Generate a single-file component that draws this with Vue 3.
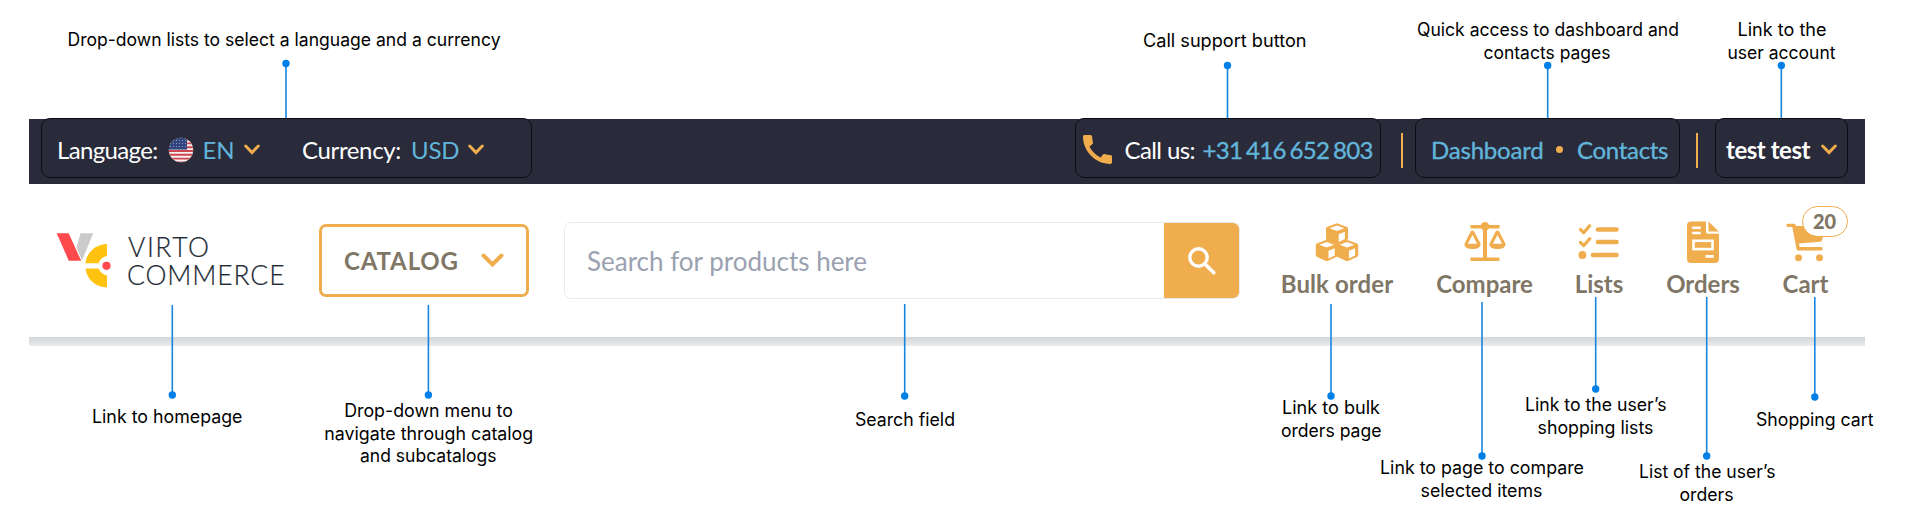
<script setup>
const callouts = [
  { x: 286, from: 63.5, to: 118, dot: 63.5, lines: [['Drop-down lists to select a language and a currency', 68, 500, 46]] },
  { x: 1227.5, from: 65.5, to: 118, dot: 65.5, lines: [['Call support button', 1143.5, 1306, 47]] },
  { x: 1547.7, from: 65.5, to: 118, dot: 65.5, lines: [['Quick access to dashboard and', 1417.5, 1678.5, 36.3], ['contacts pages', 1484, 1610, 58.5]] },
  { x: 1781.3, from: 65.5, to: 118, dot: 65.5, lines: [['Link to the', 1738, 1826, 36.3], ['user account', 1728, 1835, 58.5]] },
  { x: 172.3, from: 305, to: 395, dot: 395, lines: [['Link to homepage', 92.5, 242, 422.7]] },
  { x: 428.4, from: 305, to: 395, dot: 395, lines: [['Drop-down menu to', 344.7, 512.4, 417], ['navigate through catalog', 324.7, 532.7, 440], ['and subcatalogs', 360.5, 496, 462.2]] },
  { x: 904.7, from: 304, to: 396, dot: 396, lines: [['Search field', 855.4, 954.5, 426]] },
  { x: 1331, from: 304, to: 396, dot: 396, lines: [['Link to bulk', 1282.5, 1379.5, 414], ['orders page', 1281.5, 1381, 437]] },
  { x: 1482, from: 302, to: 456, dot: 456, lines: [['Link to page to compare', 1380.5, 1583.5, 474], ['selected items', 1421, 1542, 497]] },
  { x: 1595.7, from: 297, to: 389, dot: 389, lines: [['Link to the user’s', 1525.5, 1666, 411], ['shopping lists', 1538, 1653, 433.5]] },
  { x: 1706.7, from: 297, to: 456, dot: 456, lines: [['List of the user’s', 1639.5, 1775, 478], ['orders', 1680, 1733, 501]] },
  { x: 1814.8, from: 297, to: 397, dot: 397, lines: [['Shopping cart', 1756.5, 1873, 426]] },
]
</script>

<template>
  <div class="page">
    <header>
      <div class="topbar">
        <div class="group locale">
          <span class="t w-lang">Language:</span>
          <svg class="flag" width="26" height="26" viewBox="0 0 26 26">
            <defs><clipPath id="round"><circle cx="13" cy="13" r="12.2" /></clipPath></defs>
            <g clip-path="url(#round)">
              <rect width="26" height="26" fill="#f5f2f2" />
              <path d="M0 2.6h26M0 6.4h26M0 10.2h26M0 14h26M0 17.8h26M0 21.6h26M0 25.4h26" stroke="#cf4651" stroke-width="1.9" />
              <rect width="19" height="12.6" fill="#32457f" />
              <path d="M2 3.5h17M2 6.5h17M2 9.5h17" stroke="#8c9abd" stroke-width="1" stroke-dasharray="1 2" />
            </g>
          </svg>
          <span class="t blue w-en">EN</span>
          <svg class="chev" width="16" height="11" viewBox="0 0 16 11"><path d="M1.7 2l6.3 6.5L14.3 2" /></svg>
          <span class="t w-cur">Currency:</span>
          <span class="t blue w-usd">USD</span>
          <svg class="chev" width="16" height="11" viewBox="0 0 16 11"><path d="M1.7 2l6.3 6.5L14.3 2" /></svg>
        </div>
        <div class="group call">
          <svg class="phone" width="29" height="29" viewBox="3 3 18 18"><path fill="#f0ad4e" d="M20.01 15.38c-1.23 0-2.42-.2-3.53-.56-.35-.12-.74-.03-1.01.24l-1.57 1.97c-2.83-1.35-5.48-3.9-6.89-6.83l1.95-1.66c.27-.28.35-.67.24-1.02-.37-1.11-.56-2.3-.56-3.53 0-.54-.45-.99-.99-.99H4.19C3.65 3 3 3.24 3 3.99 3 13.28 10.73 21 20.01 21c.71 0 .99-.63.99-1.18v-3.45c0-.54-.45-.99-.99-.99z" /></svg>
          <span class="t w-call">Call us:</span>
          <span class="t blue semi w-num">+31 416 652 803</span>
        </div>
        <i class="sep s1"></i>
        <div class="group links">
          <span class="t blue semi w-dash">Dashboard</span>
          <i class="dot"></i>
          <span class="t blue semi w-cont">Contacts</span>
        </div>
        <i class="sep s2"></i>
        <div class="group user">
          <span class="t bold w-user">test test</span>
          <svg class="chev" width="16" height="11" viewBox="0 0 16 11"><path d="M1.7 2l6.3 6.5L14.3 2" /></svg>
        </div>
      </div>

      <div class="main">
        <svg class="logo" width="230" height="60" viewBox="55 230 230 60">
          <path fill="#cbcbcb" d="M80.5 233.3h12.8L82 260.5l-5.500-13z" />
          <path fill="#ff4a4d" d="M56.700 233.300h12L81.200 260.800H68.800z" />
          <path fill="#ffc20e" d="M107 244v12c-4.500 1-7.300 3.500-8.300 7.200H85.500C86.500 252.500 96 244 107 244z" />
          <path fill="#ffc20e" d="M107 287.500v-12c-4.500-1-7.300-3.500-8.300-6.900H85.500c1 10.600 10.500 18.900 21.500 18.900z" />
          <circle cx="106.500" cy="265.800" r="4.100" fill="#ff4a4d" />
          <text x="128" y="256.600" textLength="81" class="brand">VIRTO</text>
          <text x="127" y="285.400" textLength="157.500" class="brand">COMMERCE</text>
        </svg>
        <div class="catalog">
          <span class="w-cat">CATALOG</span>
          <svg width="23" height="15" viewBox="0 0 23 15"><path d="M2.500 2.500l9 9 9-9" fill="none" stroke="#f0ad4e" stroke-width="4" stroke-linecap="round" /></svg>
        </div>
        <div class="search">
          <span class="w-search">Search for products here</span>
          <div class="go">
            <svg width="30" height="30" viewBox="0 0 30 30" fill="none" stroke="#fff"><circle cx="11.500" cy="11.500" r="8.700" stroke-width="3.400" /><path d="M18 18l8.800 8.800" stroke-width="3.700" stroke-linecap="round" /></svg>
          </div>
        </div>
        <nav>
          <a class="n-bulk">
            <svg width="44" height="42" viewBox="0 0 44 42">
              <g id="cube">
                <path fill="#f0ad4e" d="M11.500 18.700L1.800 22.500Q.8 23 .8 24v10q0 1.200 1 1.700l9 4.200q1 .4 2 0l9-4.200q1-.5 1-1.700V24q0-1-1-1.500z" />
                <path fill="#fff" d="M11.700 21l7.300 2.700-7.300 2.900-7.300-2.900z M13.500 29.800l6.200-2.600v7.300l-6.200 2.900z" />
              </g>
              <use href="#cube" x="20.400" />
              <use href="#cube" x="10.200" y="-16.500" />
            </svg>
            <span class="w-bulk">Bulk order</span>
          </a>
          <a class="n-comp">
            <svg width="42" height="42" viewBox="0 0 42 42" fill="#f0ad4e">
              <path d="M6.500 4h29v3.600h-29zM6.500 36.500h29V40h-29zM19 5h4v33h-4z" />
              <circle cx="21" cy="5.200" r="4.200" />
              <path fill-rule="evenodd" d="M6.600 10.500q1.800-2 3.600 0L16.700 23q0 5-8.200 5T.4 23zM8.500 14l-4.600 8.700h9.200zM31.600 10.500q1.800-2 3.600 0L41.600 23q0 5-8.100 5t-8.200-5zM33.500 14l-4.600 8.700h9.200z" />
            </svg>
            <span class="w-comp">Compare</span>
          </a>
          <a class="n-list">
            <svg width="42" height="42" viewBox="0 0 42 42" fill="none" stroke="#f0ad4e" stroke-linecap="round" stroke-linejoin="round">
              <path d="M20 8.500h18.500M20 21h18.500M15 34h23.500" stroke-width="4.600" />
              <path d="M2.500 8.500l3.200 3.200 6-7M2.500 21.500l3.200 3.200 6-7" stroke-width="3.200" />
              <circle cx="4.400" cy="34" r="3.900" fill="#f0ad4e" stroke="none" />
            </svg>
            <span class="w-list">Lists</span>
          </a>
          <a class="n-ord">
            <svg width="32" height="42" viewBox="0 0 32 42">
              <path fill="#f0ad4e" d="M4 .5h15v10.500q0 1.700 1.700 1.700H32V38q0 4-4 4H4q-4 0-4-4V4.500q0-4 4-4zM21.500.5L31.800 10.500H21.500z" />
              <path fill="#fff" d="M5.200 5.500h8.500v2.600H5.200zM5.200 10.700h8.500v2.600H5.200zM18.500 34h8.200v2.700h-8.200z" />
              <rect x="6.500" y="19.800" width="19" height="8.300" fill="none" stroke="#fff" stroke-width="2.600" />
            </svg>
            <span class="w-ord">Orders</span>
          </a>
          <a class="n-cart">
            <svg width="40" height="42" viewBox="0 0 40 42" fill="#f0ad4e">
              <path d="M2 2.700h6q1.500 0 1.800 1.500L10 5h29l-2.700 13.500q-.4 2-2.200 2.200L13 22.500l.6 3.500H35q1.700 0 1.700 1.700T35 29.500H12.200q-1.300 0-1.700-1.500L6.300 6H2Q.3 6 .3 4.300T2 2.700z" />
              <circle cx="12.500" cy="36.700" r="3.500" /><circle cx="33.500" cy="36.700" r="3.500" />
            </svg>
            <span class="w-cart">Cart</span>
            <b class="badge">20</b>
          </a>
        </nav>
      </div>
      <div class="shade"></div>
    </header>

    <svg class="notes" width="1909" height="532" viewBox="0 0 1909 532">
      <g v-for="c in callouts" :key="c.x">
        <line :x1="c.x" :x2="c.x" :y1="c.from" :y2="c.to" stroke="#1685e2" stroke-width="1.600" />
        <circle :cx="c.x" :cy="c.dot" r="3.700" fill="#007fe6" />
        <text v-for="l in c.lines" :key="l[0]" :x="l[1] - .5" :y="l[3]" :textLength="l[2] - l[1] + 1" lengthAdjust="spacingAndGlyphs">{{ l[0] }}</text>
      </g>
    </svg>
  </div>
</template>

<style>
body { margin: 0; background: #fff; }
</style>

<style scoped>
.page { position: relative; width: 1909px; height: 532px; overflow: hidden; box-sizing: border-box; padding: 118px 44px 0 29px; font-family: Lato, "Liberation Sans", sans-serif; }
.topbar { display: flex; height: 66px; background: linear-gradient(#fff 0 1px, #292b3a 1px); box-sizing: border-box; padding-left: 12px; }
.group { display: flex; align-items: center; height: 59.500px; box-sizing: border-box; border: 1.500px solid #0c0d14; border-radius: 9px; padding-top: 4px; background: #292b3a; flex: none; }
.t { flex: none; font-size: 24px; line-height: 30px; color: #fff; white-space: nowrap; }
.blue { color: #62b5da; }
.semi { -webkit-text-stroke: .35px #62b5da; }
.bold { font-weight: 700; }
.chev { flex: none; }
.chev path { fill: none; stroke: #f0ad4e; stroke-width: 3; stroke-linecap: round; }
.locale { width: 491px; padding-left: 15px; }
.w-lang { width: 111px; letter-spacing: -.65px; }
.flag { flex: none; margin-right: 8.500px; }
.w-en { width: 41.500px; }
.w-cur { width: 109px; margin-left: 42px; letter-spacing: -.35px; }
.w-usd { width: 57px; letter-spacing: -.2px; }
.call { width: 306px; margin-left: 543px; padding-left: 7px; }
.phone { flex: none; }
.w-call { width: 78px; margin-left: 12.500px; letter-spacing: -.6px; }
.w-num { letter-spacing: -.65px; word-spacing: -1.800px; }
.sep { width: 2px; height: 35px; margin-top: 15px; background: #f0ad4e; flex: none; }
.s1 { margin-left: 20px; }
.links { width: 265px; margin-left: 12px; padding-left: 15px; }
.w-dash { width: 125px; letter-spacing: -.2px; }
.dot { flex: none; width: 7px; height: 7px; border-radius: 50%; background: #f0ad4e; margin-right: 14px; }
.w-cont { letter-spacing: -.3px; }
.s2 { margin-left: 16px; }
.user { width: 133px; margin-left: 17px; padding-left: 10px; }
.w-user { width: 95px; letter-spacing: -.45px; }

.main { display: flex; height: 153px; padding-left: 26px; }
.logo { margin-top: 46px; flex: none; }
.brand { font-weight: 300; font-size: 26.500px; fill: #222a35; stroke: #222a35; stroke-width: .2px; }
.catalog { display: flex; align-items: center; box-sizing: border-box; width: 210px; height: 73px; margin: 40px 0 0 34px; border: 3px solid #f0ad4e; border-radius: 7px; padding-left: 22px; flex: none; font-weight: 700; font-size: 24px; color: #7f7666; }
.w-cat { width: 137px; letter-spacing: .85px; }
.search { display: flex; align-items: center; box-sizing: border-box; width: 676px; height: 77px; margin: 38px 0 0 35px; border: 1.500px solid #e9eaee; border-radius: 7px; padding-left: 22px; flex: none; font-size: 26px; color: #9aa1b1; overflow: hidden; }
.w-search { flex: 1; }
.go { display: flex; align-items: center; justify-content: center; width: 75px; height: 77px; background: #f0ad4e; }
nav { display: flex; padding-top: 37px; }
nav a { position: relative; display: flex; flex-direction: column; align-items: center; height: 90px; flex: none; font-weight: 700; font-size: 24px; line-height: 30px; color: #7f7666; white-space: nowrap; }
nav a span { margin-top: 6px; }
.n-bulk { width: 112px; margin-left: 41px; }
.n-comp { width: 97px; margin-left: 43px; }
.n-list { width: 48px; margin-left: 42px; }
.n-ord { width: 74px; margin-left: 43px; }
.n-cart { width: 46px; margin-left: 42.500px; }
.w-bulk { letter-spacing: .1px; }
.badge { position: absolute; left: 19px; top: -15px; width: 46px; height: 31px; box-sizing: border-box; border: 1.500px solid #f0ad4e; border-radius: 16px; background: #fff; font-size: 20px; line-height: 28px; text-align: center; }
.shade { width: 1836px; height: 9px; background: linear-gradient(#d4d6d8, #dcdee0 45%, #ebecee); }
.notes { position: absolute; left: 0; top: 0; }
.notes text { font-family: Inter, "Liberation Sans", sans-serif; font-size: 18px; fill: #000; }
</style>
